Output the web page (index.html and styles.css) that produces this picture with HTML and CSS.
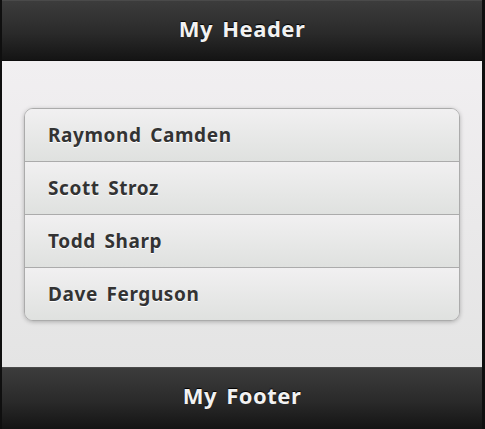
FILE: index.html
```html
<!DOCTYPE html>
<html>
<head>
<meta charset="utf-8">
<link rel="stylesheet" href="styles.css">
</head>
<body>
<div class="page">
  <header class="bar bar-header"><h1>My Header</h1></header>
  <main class="content">
    <ul class="listview">
      <li>Raymond Camden</li>
      <li>Scott Stroz</li>
      <li>Todd Sharp</li>
      <li>Dave Ferguson</li>
    </ul>
  </main>
  <footer class="bar bar-footer"><h2>My Footer</h2></footer>
</div>
</body>
</html>
```
FILE: styles.css
```css
html, body {
  margin: 0;
  padding: 0;
  height: 100%;
  background: #101010;
}
.page {
  height: 429px;
  box-sizing: border-box;
  border-left: 2px solid #0f0f0f;
  border-right: 3px solid #0f0f0f;
  display: flex;
  flex-direction: column;
  font-family: "Noto Sans", "Open Sans", sans-serif;
}
.bar {
  display: flex;
  align-items: center;
  justify-content: center;
  background: linear-gradient(#3c3c3c, #2a2a2a 55%, #141414);
  color: #f2f2f2;
  box-sizing: border-box;
}
.bar h1, .bar h2 {
  margin: 0;
  font-size: 22px;
  font-weight: bold;
  letter-spacing: 0.5px;
  word-spacing: 3px;
  text-shadow: 0 -1px 1px #000;
}
.bar-header {
  height: 61px;
  padding-bottom: 6px;
  border-top: 1px solid #4a4a4a;
  border-bottom: 1px solid #0c0c0c;
}
.bar-footer {
  height: 62px;
  padding-bottom: 8px;
  border-top: 1px solid #4a4a4a;
}
.content {
  flex: 1;
  background: linear-gradient(#f1eff1, #e4e4e4);
  padding: 47px 22px 0;
}
.listview {
  list-style: none;
  margin: 0;
  padding: 0;
  border: 1px solid #ababab;
  border-radius: 9px;
  box-shadow: 0 1px 4px rgba(0,0,0,0.25);
  overflow: hidden;
}
.listview li {
  height: 52px;
  display: flex;
  align-items: center;
  padding-left: 23px;
  background: linear-gradient(#f1f0f1, #dfe1df);
  border-top: 1px solid #ababab;
  color: #333;
  font-size: 19px;
  font-weight: bold;
  letter-spacing: 0.6px;
  word-spacing: 3px;
  text-shadow: 0 1px 0 #fff;
}
.listview li:first-child {
  border-top: 0;
}
```
